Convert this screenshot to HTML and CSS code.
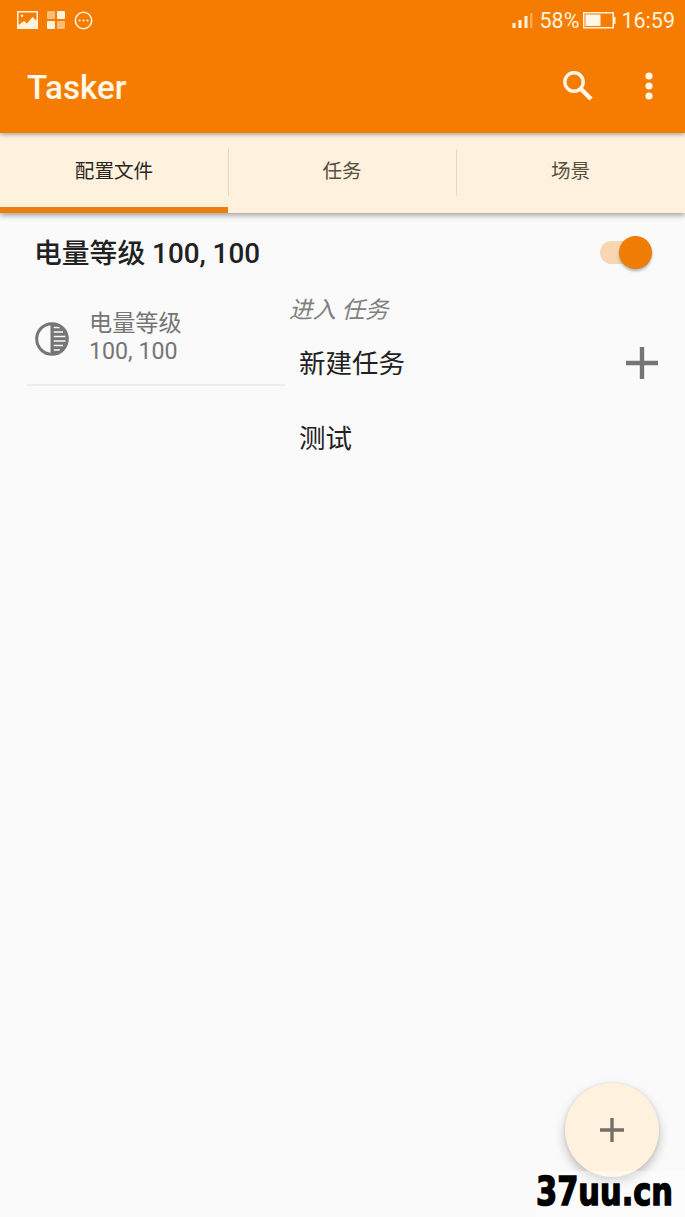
FILE: index.html
```html
<!DOCTYPE html>
<html lang="zh-CN">
<head>
  <meta charset="UTF-8" />
  <meta name="viewport" content="width=device-width, initial-scale=1.0" />
  <title>Tasker</title>
  <link rel="stylesheet" href="styles.css">
</head>
<body>
  <div class="app-header">
    <div class="status-bar">
      <div class="status-left">
        <svg width="21" height="18" viewBox="0 0 21 18">
          <path fill="#fff3dc" fill-rule="evenodd" d="M0 0H21V18H0ZM1.500 1.500V14L7 10L10 12.500L15.500 6L19.500 9.500V1.500ZM5 3.500A1.300 1.300 0 1 1 5 6.100A1.300 1.300 0 1 1 5 3.500Z"/>
        </svg>
        <svg width="18" height="18" viewBox="0 0 18 18" fill="#fff3dc">
          <rect width="8" height="8" rx="1" opacity=".55"/>
          <rect x="10" width="8" height="8" rx="1"/>
          <rect y="10" width="8" height="8" rx="1"/>
          <rect x="10" y="10" width="8" height="8" rx="1" opacity=".55"/>
        </svg>
        <svg width="19" height="19" viewBox="0 0 19 19" fill="#fff3dc">
          <circle cx="9.500" cy="9.500" r="8.200" fill="none" stroke="#fff3dc" stroke-width="1.600"/>
          <circle cx="5.500" cy="9.500" r="1.100"/>
          <circle cx="9.500" cy="9.500" r="1.100"/>
          <circle cx="13.500" cy="9.500" r="1.100"/>
        </svg>
      </div>
      <div class="status-right">
        <svg class="signal" width="21" height="17" viewBox="0 0 21 17" fill="#fff3dc">
          <rect x=".5" y="11" width="3" height="5"/>
          <rect x="6.500" y="8" width="3" height="8"/>
          <rect x="12.500" y="4" width="3" height="12"/>
          <rect x="18" y="1" width="2.500" height="15" opacity=".4"/>
        </svg>
        <span class="percent">58%</span>
        <svg class="battery" width="33" height="17" viewBox="0 0 33 17">
          <rect x=".75" y=".75" width="29.500" height="15" fill="none" stroke="#fff3dc" stroke-width="1.500"/>
          <rect x="2.500" y="2.500" width="15" height="11.500" fill="#fff8ea"/>
          <rect x="30.500" y="5" width="2" height="7" fill="#fff3dc"/>
        </svg>
        <span class="clock">16:59</span>
      </div>
    </div>
    <div class="toolbar">
      <h1>Tasker</h1>
      <svg class="search" width="30" height="30" viewBox="0 0 30 30" fill="none" stroke="#fff8e8">
        <circle cx="11" cy="11" r="9.200" stroke-width="3.400"/>
        <path stroke-width="4.400" d="M17.500 17.500L28 28"/>
      </svg>
      <svg class="more" width="8" height="28" viewBox="0 0 8 28" fill="#fff8e8">
        <circle cx="4" cy="4" r="3.600"/>
        <circle cx="4" cy="14" r="3.600"/>
        <circle cx="4" cy="24" r="3.600"/>
      </svg>
    </div>
  </div>

  <div class="tabs">
    <div class="tab active">配置文件</div>
    <div class="tab">任务</div>
    <div class="tab">场景</div>
  </div>

  <div class="profile">
    <div class="profile-head">
      <h2>电量等级 100, 100</h2>
      <div class="switch"><div class="thumb"></div></div>
    </div>
    <div class="profile-body">
      <div class="context">
        <svg width="34" height="34" viewBox="0 0 34 34">
          <path fill="#757575" d="M16 2A15 15 0 0 1 16 32Z"/>
          <path stroke="#fafafa" stroke-width="1.500" d="M18.500 5.500H25M18.500 10H28M18.500 14.500H30.500M18.500 19H30.500M18.500 23.500H28M18.500 28H25"/>
          <circle cx="17" cy="17" r="15.300" fill="none" stroke="#757575" stroke-width="3"/>
          <path stroke="#757575" stroke-width="3" d="M17 2V32"/>
        </svg>
        <div class="context-name">电量等级<br>100, 100</div>
      </div>
      <div class="task-menu">
        <div class="menu-title">进入 任务</div>
        <div class="menu-item">
          <span>新建任务</span>
          <svg width="32" height="32" viewBox="0 0 32 32">
            <path stroke="#757575" stroke-width="4.400" d="M16 0V32M0 16H32"/>
          </svg>
        </div>
        <div class="menu-item"><span>测试</span></div>
      </div>
    </div>
  </div>

  <div class="fab">
    <svg width="24" height="24" viewBox="0 0 24 24">
      <path stroke="#757067" stroke-width="3.400" d="M12 0V24M0 12H24"/>
    </svg>
  </div>
  <div class="watermark"><span>37uu.cn</span></div>
</body>
</html>
```

FILE: styles.css
```css
* {
  box-sizing: border-box;
}
body {
  margin: 0;
  height: 1217px;
  position: relative;
  overflow: hidden;
  font-family: Roboto, "Noto Sans CJK SC", sans-serif;
  background: #fafafa;
  color: #212121;
}
svg {
  display: block;
  flex: none;
}
.app-header {
  position: relative;
  z-index: 2;
  height: 133px;
  background: #f57c00;
  box-shadow: 0 1px 5px rgba(0, 0, 0, 0.4);
}
.status-bar {
  display: flex;
  justify-content: space-between;
  height: 40px;
  padding: 0 10px 0 17px;
  color: #fff3dc;
  font-size: 22px;
  line-height: 41px;
}
.status-left, .status-right {
  display: flex;
  align-items: center;
}
.status-left {
  gap: 9px;
}
.percent {
  margin-left: 7px;
  font-size: 21.5px;
}
.battery {
  margin-left: 4px;
}
.clock {
  margin-left: 5px;
  font-size: 21.5px;
}
.toolbar {
  display: flex;
  align-items: center;
  height: 92px;
  padding: 0 32px 0 27px;
}
.toolbar h1 {
  margin: 4px auto 0 0;
  font-size: 33.2px;
  font-weight: 500;
  line-height: 40px;
  color: #fff8e8;
}
.more {
  margin-left: 52px;
}
.tabs {
  position: relative;
  z-index: 1;
  display: grid;
  grid-template-columns: 228px 228px 1fr;
  grid-template-rows: 80px;
  background: #fef2df;
  box-shadow: 0 2px 6px rgba(0, 0, 0, 0.4);
}
.tab {
  position: relative;
  text-align: center;
  font-size: 19.6px;
  line-height: 77px;
  color: #56503f;
}
.tab + .tab::before {
  content: "";
  position: absolute;
  left: 0;
  top: 16px;
  width: 1px;
  height: 47px;
  background: #e4dac9;
}
.tab.active {
  color: #2a261d;
  border-bottom: 6px solid #ed7d0c;
}
.profile-head {
  display: flex;
  justify-content: space-between;
  align-items: center;
  height: 80px;
  padding: 0 33px 2px 34px;
}
.profile-head h2 {
  margin: -2px 0 0;
  font-size: 27.8px;
  font-weight: 500;
}
.switch {
  display: flex;
  justify-content: flex-end;
  align-items: center;
  width: 52px;
  height: 23px;
  border-radius: 12px;
  background: #f8d6b3;
}
.thumb {
  width: 33px;
  height: 33px;
  border-radius: 50%;
  background: #ef7c05;
  box-shadow: 0 2px 3px rgba(0, 0, 0, 0.3);
}
.profile-body {
  display: flex;
  align-items: flex-start;
}
.context {
  display: flex;
  align-items: center;
  width: 258px;
  height: 93px;
  margin-left: 27px;
  padding-left: 8px;
  border-bottom: 2px solid #ececec;
}
.context-name {
  margin: -4px 0 0 20px;
  font-size: 23.2px;
  line-height: 28px;
  color: #757575;
}
.task-menu {
  flex: 1;
  padding: 0 27px 0 4px;
}
.menu-title {
  height: 32px;
  font-size: 23.4px;
  font-style: italic;
  line-height: 34px;
  color: #808080;
}
.menu-item {
  display: flex;
  justify-content: space-between;
  align-items: center;
  height: 75px;
  padding-left: 10px;
  font-size: 26.5px;
}
.menu-item span {
  margin-top: -2px;
}
.fab {
  position: absolute;
  left: 565px;
  top: 1083px;
  display: flex;
  align-items: center;
  justify-content: center;
  width: 94px;
  height: 94px;
  border-radius: 50%;
  background: #fef2df;
  box-shadow: 0 5px 11px rgba(0, 0, 0, 0.24), 0 0 3px rgba(0, 0, 0, 0.1);
}
.watermark {
  position: absolute;
  right: 0;
  bottom: 0;
  width: 149px;
  height: 46px;
  background: rgba(255, 255, 255, 0.4);
}
.watermark span {
  display: block;
  font-family: "DejaVu Sans", sans-serif;
  font-size: 39px;
  font-weight: bold;
  line-height: 42px;
  color: #000;
  -webkit-text-stroke: 1.5px #000;
  transform: scaleX(0.78);
  transform-origin: left;
}
```
